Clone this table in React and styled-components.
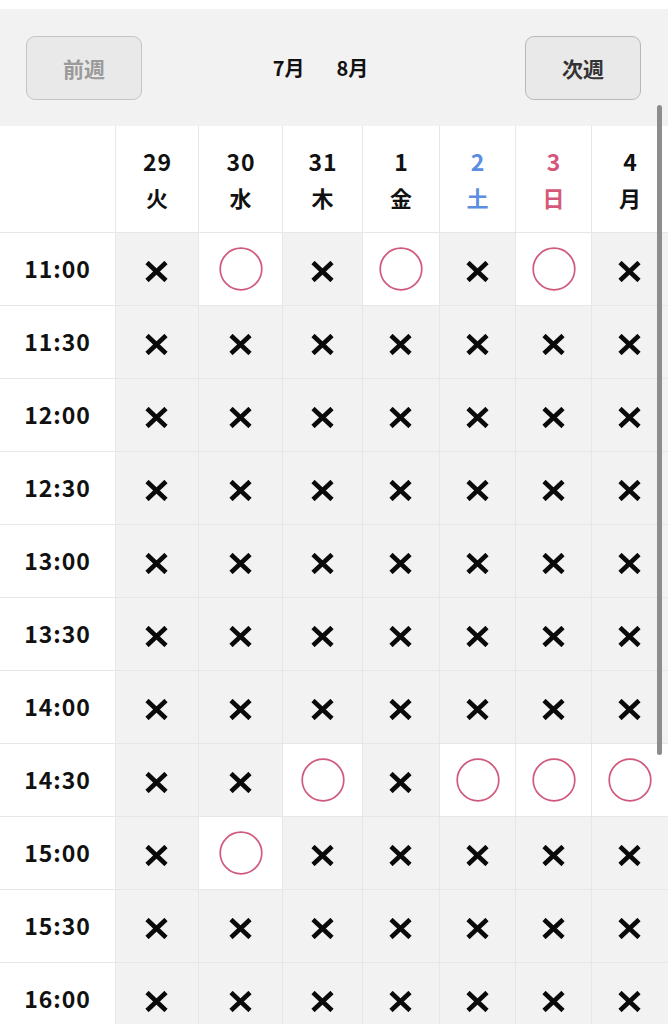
import React from "react";
import styled, { createGlobalStyle } from "styled-components";

const GlobalStyle = createGlobalStyle`
  html, body { margin: 0; padding: 0; background: #ffffff; }
  body {
    font-family: "Noto Sans CJK JP", "Noto Sans", sans-serif;
    color: #111;
    overflow: hidden;
  }
`;

const Page = styled.div`
  padding-top: 9px;
  width: 668px;
  position: relative;
`;

const Header = styled.div`
  background: #f2f2f2;
  height: 117px;
  display: flex;
  align-items: center;
  justify-content: space-between;
  padding: 0 27px 0 26px;
  box-sizing: border-box;
`;

const NavButton = styled.button`
  width: 116px;
  height: 64px;
  border: 1px solid ${(p) => (p.$disabled ? "#c4c4c4" : "#b8b8b8")};
  border-radius: 9px;
  background: #e9e9e9;
  color: ${(p) => (p.$disabled ? "#9a9a9a" : "#333333")};
  font-family: inherit;
  font-size: 21px;
  font-weight: 700;
  padding: 0;
  box-sizing: border-box;
`;

const Months = styled.div`
  display: flex;
  gap: 32px;
  font-size: 20px;
  font-weight: 700;
  margin-right: 26px;
  color: #111;
`;

const Grid = styled.div`
  display: grid;
  grid-template-columns: 115px 82px 83px 79px 76px 75px 75px 76px;
  grid-auto-rows: 72px;
  grid-template-rows: 106px;
  gap: 1px;
  background: #e7e7e7;
  padding-bottom: 1px;
`;

const HeadCell = styled.div`
  background: #ffffff;
  display: flex;
  flex-direction: column;
  align-items: center;
  justify-content: center;
  font-weight: 700;
  line-height: 36px;
  color: ${(p) => p.$color || "#111"};
`;

const DateNum = styled.span`
  font-size: 23px;
  letter-spacing: 0.8px;
  margin-right: -0.8px;
`;

const WeekDay = styled.span`
  font-size: 22px;
`;

const TimeCell = styled.div`
  background: #ffffff;
  display: flex;
  align-items: center;
  justify-content: center;
  font-size: 23px;
  letter-spacing: 0.9px;
  font-weight: 700;
  color: #111;
  padding-bottom: 2px;
`;

const SlotCell = styled.div`
  background: ${(p) => (p.$open ? "#ffffff" : "#f2f2f2")};
  display: flex;
  align-items: center;
  justify-content: center;
`;

const CrossIcon = styled.svg`
  width: 23px;
  height: 21px;
  margin-top: 5px;
  margin-left: -1px;
`;

const CircleIcon = styled.svg`
  width: 44px;
  height: 44px;
  margin-top: -1px;
`;

const ScrollThumb = styled.div`
  position: absolute;
  left: 657px;
  top: 105px;
  width: 5px;
  height: 650px;
  border-radius: 3px;
  background: #8d8d8d;
`;

const Cross = () => (
  <CrossIcon viewBox="0 0 23 21">
    <path d="M2 1.5 L21 19.5 M21 1.5 L2 19.5" stroke="#0a0a0a" strokeWidth="4.6" fill="none" />
  </CrossIcon>
);

const Circle = () => (
  <CircleIcon viewBox="0 0 44 44">
    <circle cx="22" cy="22" r="20.8" stroke="#cf5a7c" strokeWidth="1.7" fill="none" />
  </CircleIcon>
);

const days = [
  { d: "29", w: "火" },
  { d: "30", w: "水" },
  { d: "31", w: "木" },
  { d: "1", w: "金" },
  { d: "2", w: "土", color: "#5b8de3" },
  { d: "3", w: "日", color: "#d5587b" },
  { d: "4", w: "月" },
];

const times = [
  "11:00", "11:30", "12:00", "12:30", "13:00", "13:30",
  "14:00", "14:30", "15:00", "15:30", "16:00", "16:30",
];

const open = {
  "11:00": [1, 3, 5],
  "14:30": [2, 4, 5, 6],
  "15:00": [1],
};

export default function App() {
  return (
    <>
      <GlobalStyle />
      <Page>
        <Header>
          <NavButton $disabled>前週</NavButton>
          <Months>
            <span>7月</span>
            <span>8月</span>
          </Months>
          <NavButton>次週</NavButton>
        </Header>
        <Grid>
          <HeadCell />
          {days.map((day) => (
            <HeadCell key={day.d} $color={day.color}>
              <DateNum>{day.d}</DateNum>
              <WeekDay>{day.w}</WeekDay>
            </HeadCell>
          ))}
          {times.map((t) => (
            <React.Fragment key={t}>
              <TimeCell>{t}</TimeCell>
              {days.map((day, i) => {
                const isOpen = (open[t] || []).includes(i);
                return (
                  <SlotCell key={day.d} $open={isOpen}>
                    {isOpen ? <Circle /> : <Cross />}
                  </SlotCell>
                );
              })}
            </React.Fragment>
          ))}
        </Grid>
        <ScrollThumb />
      </Page>
    </>
  );
}
